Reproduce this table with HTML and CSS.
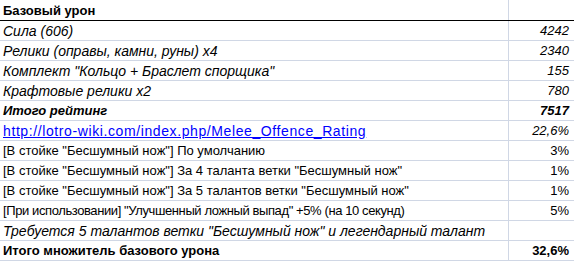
FILE: index.html
```html
<!DOCTYPE html>
<html lang="ru">
<head>
<meta charset="utf-8">
<link rel="stylesheet" href="styles.css">
</head>
<body>
<div class="sheet">
  <div class="row head"><div class="c1 b">Базовый урон</div><div class="c2"></div></div>
  <div class="row"><div class="c1 i">Сила (606)</div><div class="c2 i">4242</div></div>
  <div class="row"><div class="c1 i">Релики (оправы, камни, руны) х4</div><div class="c2 i">2340</div></div>
  <div class="row"><div class="c1 i">Комплект "Кольцо + Браслет спорщика"</div><div class="c2 i">155</div></div>
  <div class="row"><div class="c1 i">Крафтовые релики х2</div><div class="c2 i">780</div></div>
  <div class="row"><div class="c1 b bi">Итого рейтинг</div><div class="c2 b i">7517</div></div>
  <div class="row"><div class="c1"><a class="link" href="#">http://lotro-wiki.com/index.php/Melee_Offence_Rating</a></div><div class="c2 i">22,6%</div></div>
  <div class="row"><div class="c1">[В стойке "Бесшумный нож"] По умолчанию</div><div class="c2">3%</div></div>
  <div class="row"><div class="c1">[В стойке "Бесшумный нож"] За 4 таланта ветки "Бесшумный нож"</div><div class="c2">1%</div></div>
  <div class="row"><div class="c1">[В стойке "Бесшумный нож"] За 5 талантов ветки "Бесшумный нож"</div><div class="c2">1%</div></div>
  <div class="row"><div class="c1 tight">[При использовании] "Улучшенный ложный выпад" +5% (на 10 секунд)</div><div class="c2">5%</div></div>
  <div class="row"><div class="c1 i">Требуется 5 талантов ветки "Бесшумный нож" и легендарный талант</div><div class="c2"></div></div>
  <div class="row"><div class="c1 b">Итого множитель базового урона</div><div class="c2 b">32,6%</div></div>
</div>
</body>
</html>
```
FILE: styles.css
```css
html, body {
  margin: 0;
  padding: 0;
  background: #ffffff;
}
.sheet {
  width: 574px;
  font-family: "Liberation Sans", Arial, sans-serif;
  font-size: 13px;
  color: #000000;
}
.row {
  display: grid;
  grid-template-columns: 509px 64px;
  height: 19px;
  border-bottom: 1px solid #d0d7e5;
}
.row.head {
  height: 20px;
  border-bottom: 1px solid #000000;
}
.c1, .c2 {
  line-height: 20px;
  white-space: nowrap;
  overflow: hidden;
}
.c1 {
  padding-left: 3px;
  border-right: 1px solid #d0d7e5;
}
.c2 {
  text-align: right;
  padding-right: 4px;
}
.head .c1, .head .c2 {
  line-height: 22px;
}
.b { font-weight: bold; }
.i { font-style: italic; }
.c1.i { font-size: 14px; }
.c1.bi { font-style: italic; font-size: 13px; }
.tight { letter-spacing: -0.4px; }
.link {
  color: #0000ff;
  text-decoration: underline;
  font-size: 14px;
  letter-spacing: 0.6px;
}
```
